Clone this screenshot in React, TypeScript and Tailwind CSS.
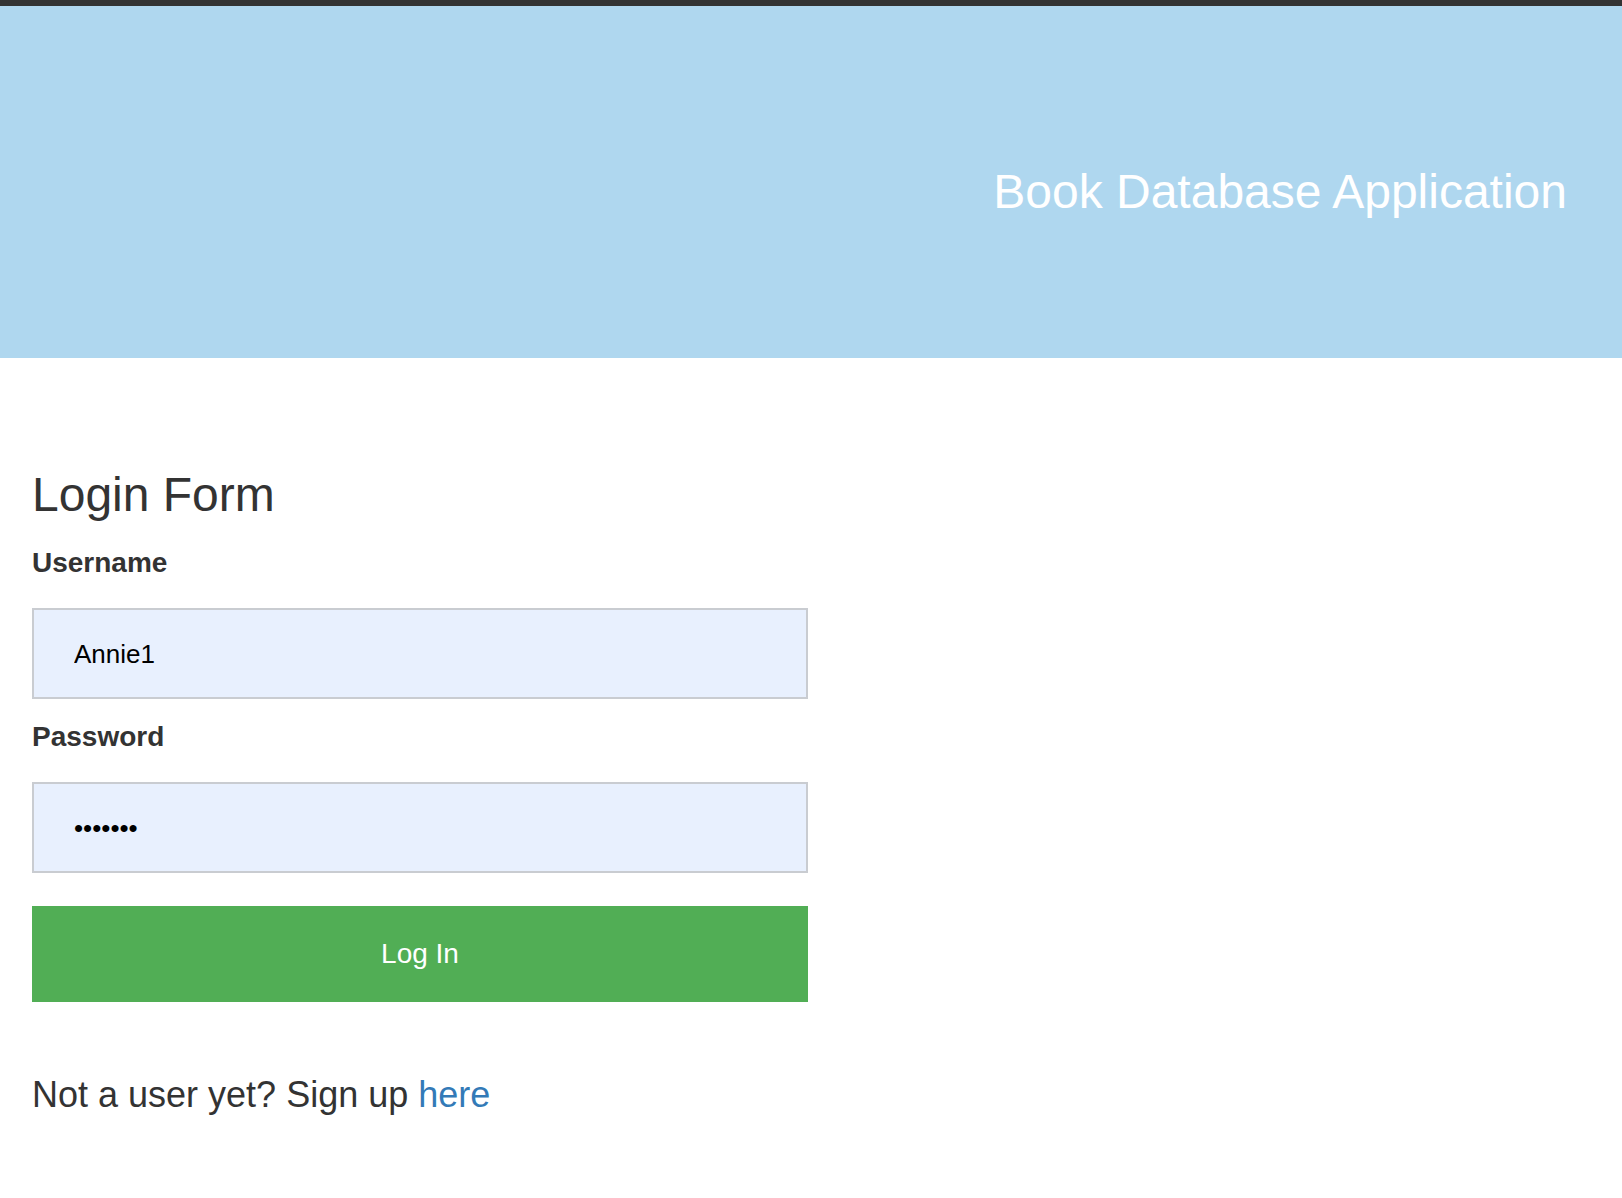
import React from 'react';

const font = { fontFamily: '"Liberation Sans", Arial, sans-serif' };

function Field({ label, type, value, first }: { label: string; type: string; value: string; first?: boolean }) {
  return (
    <div className={first ? 'mt-[21px]' : 'mt-[18px]'}>
      <label className="block text-[28px] leading-[40px] font-bold text-[#333333]">{label}</label>
      <input
        type={type}
        defaultValue={value}
        readOnly
        className="mt-[25px] block w-[776px] h-[91px] border-2 border-[#c9ccd1] bg-[#e8f0fe] pl-[40px] pt-[3px] text-[26px] text-black outline-none"
      />
    </div>
  );
}

export default function App() {
  return (
    <div className="min-h-[1198px] bg-white" style={font}>
      <div className="h-[6px] bg-[#333333]" />
      <header className="h-[352px] bg-[#afd7ef] pt-[162px] pr-[55px] text-right">
        <h1 className="text-[48px] leading-none text-white">Book Database Application</h1>
      </header>

      <main className="pl-[32px]">
        <h2 className="mt-[111px] text-[48px] leading-[52.8px] text-[#333333]">Login Form</h2>

        <form onSubmit={(e) => e.preventDefault()}>
          <Field label="Username" type="text" value="Annie1" first />
          <Field label="Password" type="password" value="1234567" />
          <button
            type="submit"
            className="mt-[33px] block w-[776px] h-[96px] bg-[#51ae55] text-[28px] text-white"
          >
            Log In
          </button>
        </form>

        <p className="mt-[75px] text-[36px] leading-none text-[#333333]">
          Not a user yet? Sign up <a href="#" className="text-[#337ab7]">here</a>
        </p>
      </main>
    </div>
  );
}
